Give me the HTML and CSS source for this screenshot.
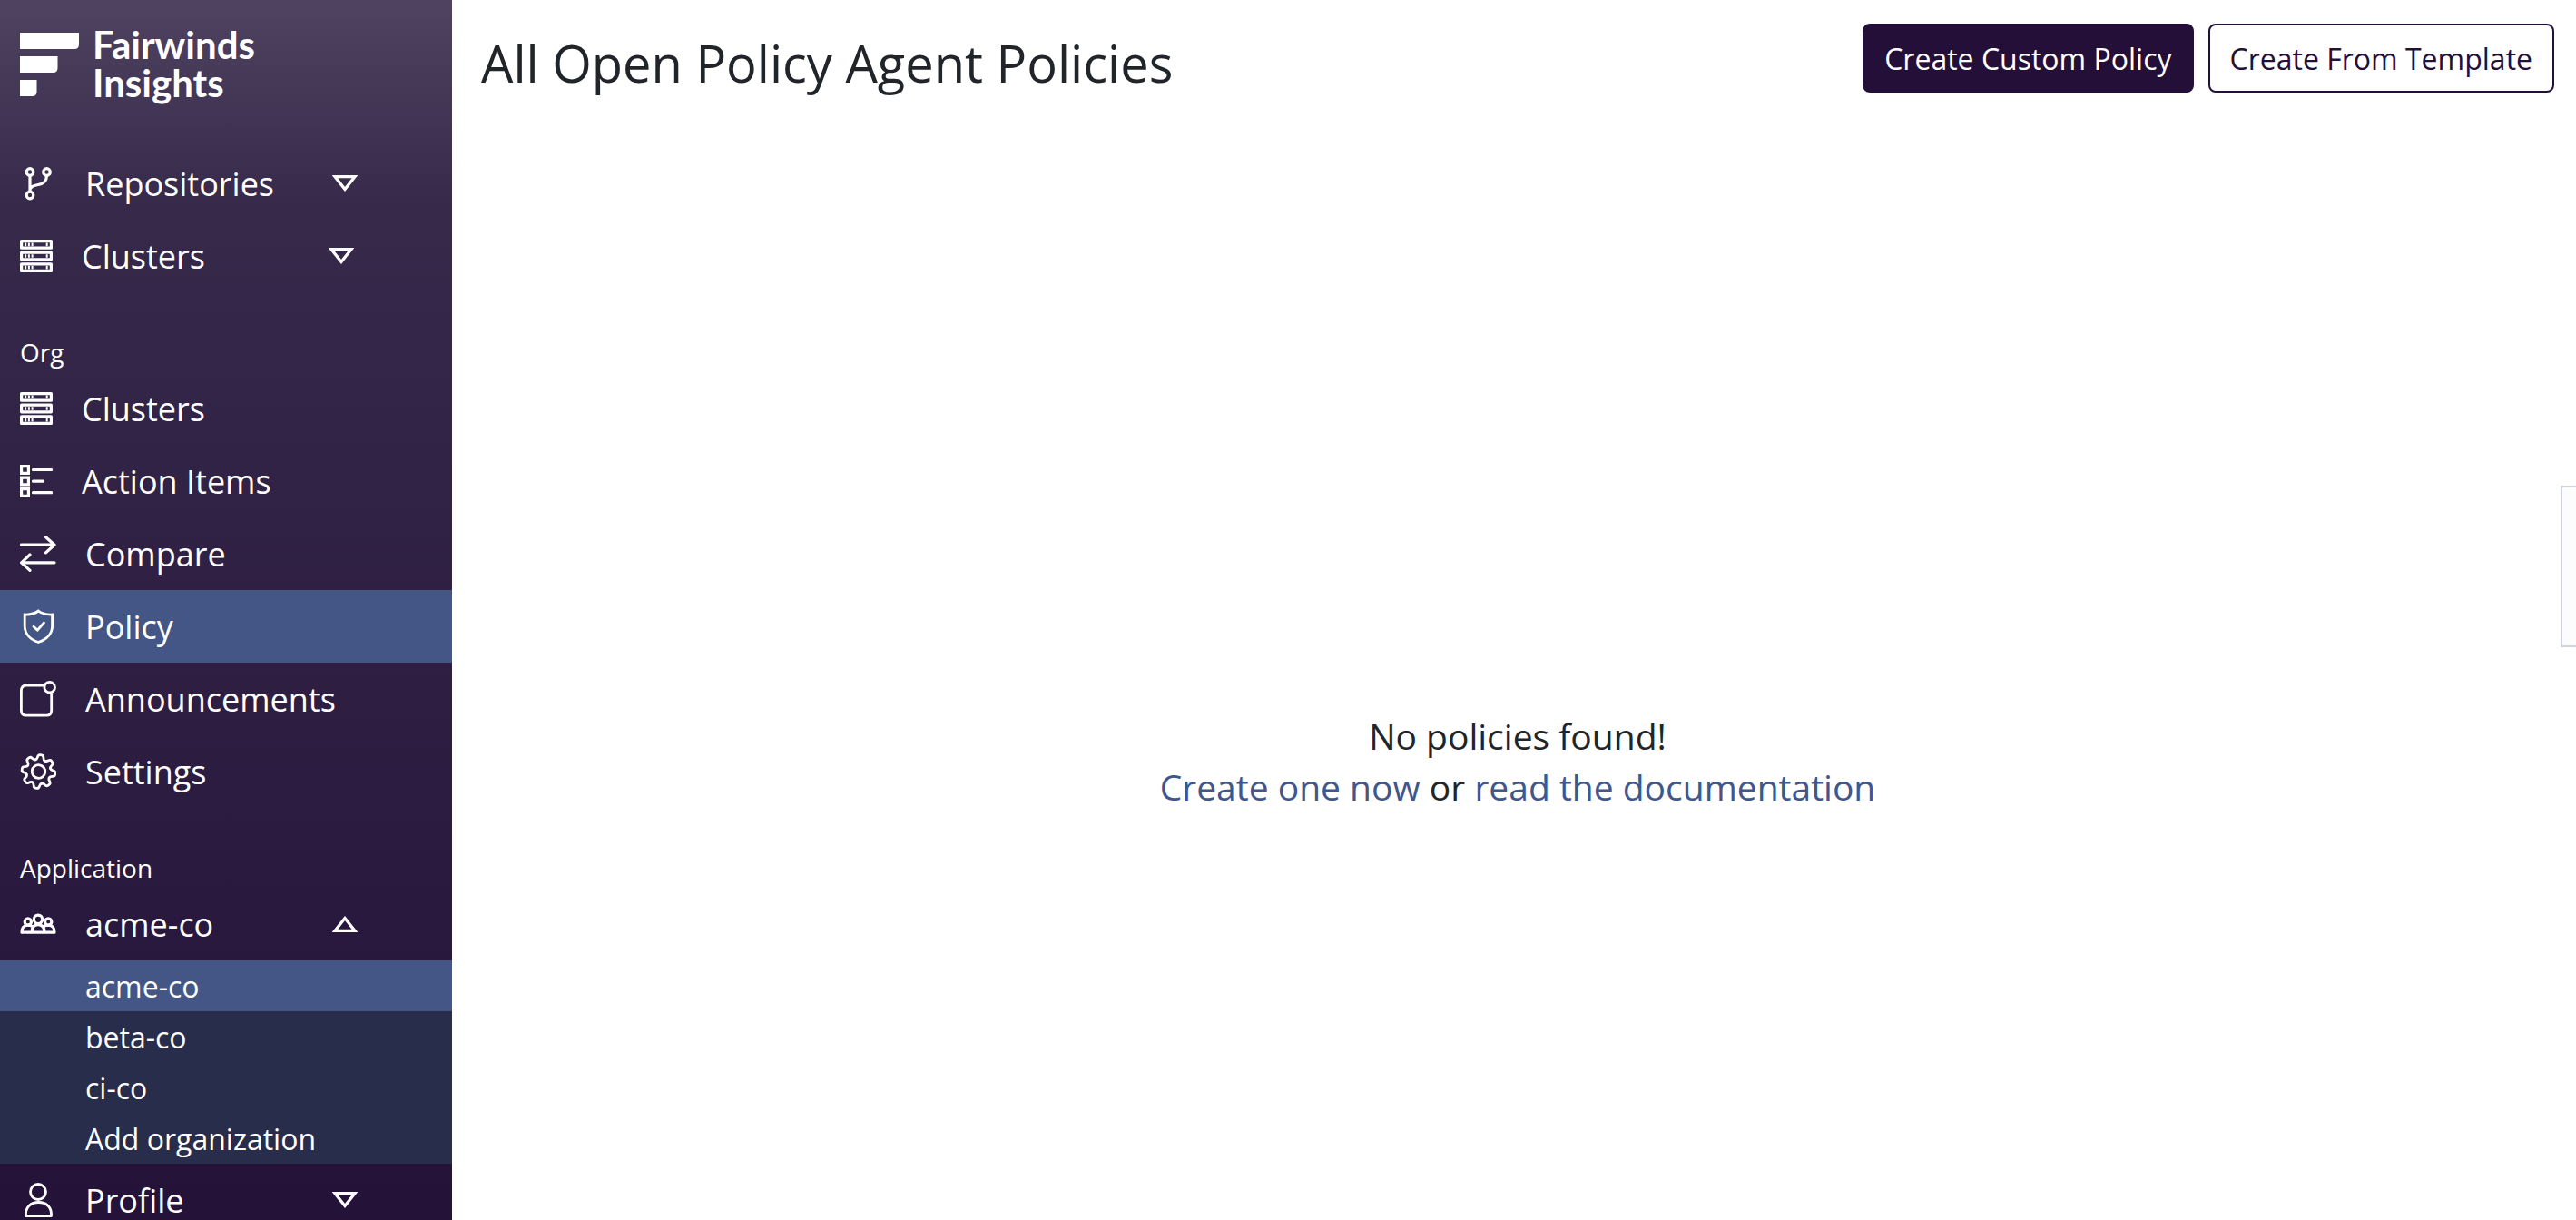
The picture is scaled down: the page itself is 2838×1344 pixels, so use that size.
FILE: index.html
```html
<!DOCTYPE html>
<html lang="en">
<head>
<meta charset="utf-8">
<meta name="viewport" content="width=device-width, initial-scale=1">
<title>All Open Policy Agent Policies</title>
<link rel="stylesheet" href="styles.css">
</head>
<body>
<svg class="sprite" aria-hidden="true">
  <symbol id="servers" viewBox="0 0 36 36">
    <path stroke-width="3.2" stroke-linejoin="round" d="M1.6 1.6h32.8v7.6H1.6zM1.6 14.2h32.8v7.6H1.6zM1.6 26.8h32.8v7.6H1.6z"/>
    <path stroke-width="2" d="M6.2 3.6v3.600M9.900 3.600v3.600M13.600 3.600v3.600M29.700 3.600v3.600M6.200 16.200v3.600M9.900 16.200v3.600M13.600 16.200v3.600M29.700 16.200v3.600M6.200 28.800v3.600M9.900 28.800v3.600M13.600 28.800v3.600M29.700 28.800v3.600"/>
  </symbol>
  <symbol id="down" viewBox="0 0 28 18">
    <path stroke-width="3.2" d="M3 1.6h22L14 15.5z"/>
  </symbol>
  <symbol id="up" viewBox="0 0 28 18">
    <path stroke-width="3.2" d="M3 16.4h22L14 2.5z"/>
  </symbol>
</svg>

<div class="layout">
  <aside class="sidebar">
    <a class="brand" href="#">
      <svg class="brand-mark" viewBox="0 0 66 72" aria-hidden="true">
        <path d="M0 1h65v13q0 5-5 5H0zM0 27h41.5v13q0 5-5 5H0zM0 53h18.5v13q0 5-5 5H0z"/>
      </svg>
      <span class="brand-name">Fairwinds<br>Insights</span>
    </a>

    <nav>
      <ul class="menu">
        <li><button class="item" type="button">
          <svg class="icon" viewBox="0 0 40 40"><circle cx="11" cy="7.5" r="3.8"/><circle cx="29.5" cy="7.5" r="3.8"/><circle cx="11" cy="33" r="3.8"/><path d="M11 11.5v17.5M29.5 11.5c0 7-4 9-9.5 10-5 1-8.500 2-9 5.500"/></svg>
          <span class="label">Repositories</span><svg class="caret"><use href="#down"/></svg>
        </button></li>
        <li><button class="item" type="button">
          <svg class="icon small"><use href="#servers"/></svg>
          <span class="label">Clusters</span><svg class="caret"><use href="#down"/></svg>
        </button></li>
      </ul>

      <h2 class="section">Org</h2>
      <ul class="menu">
        <li><a class="item" href="#"><svg class="icon small"><use href="#servers"/></svg><span class="label">Clusters</span></a></li>
        <li><a class="item" href="#">
          <svg class="icon small" viewBox="0 0 36 36"><path d="M1.6 1.6h7.8v7.8H1.6zM1.6 14.1h7.8v7.8H1.6zM1.6 26.600h7.800v7.800H1.600z"/><path stroke-linecap="round" d="M14.500 5.500h20M14.500 18.200h11M14.500 30.700h20"/></svg>
          <span class="label">Action Items</span></a></li>
        <li><a class="item" href="#">
          <svg class="icon" viewBox="0 0 40 40"><path stroke-linecap="round" stroke-linejoin="round" d="M1.500 10.200h36.500M28.500 1.700l9.500 8.500-9.500 8.700M38 29.800H1.600M11 21l-9.400 8.800 9.400 8.600"/></svg>
          <span class="label">Compare</span></a></li>
        <li><a class="item active" href="#" aria-current="page">
          <svg class="icon" viewBox="0 0 40 40"><path class="thin" d="M20.300 3C16.500 5.800 11 7.300 5.200 7v12.500c0 8.500 6 15 15.100 18 9.100-3 15.300-9.500 15.300-18V7C29.500 7.300 24 5.800 20.300 3z"/><path stroke-linecap="round" stroke-linejoin="round" class="thin" d="M15 20.300l4.300 3.900 7.200-8.200"/></svg>
          <span class="label">Policy</span></a></li>
        <li><a class="item" href="#">
          <svg class="icon" viewBox="0 0 40 40"><path class="thin" d="M26.500 5H7Q1.400 5 1.400 11v21.500q0 5.700 5.600 5.700h22q5.700 0 5.700-5.700V13.500"/><circle class="thin" cx="32.700" cy="7.200" r="5.800"/></svg>
          <span class="label">Announcements</span></a></li>
        <li><a class="item" href="#">
          <svg class="icon" viewBox="-20 -20 40 40"><g class="thin" transform="translate(.5 0) rotate(8)" stroke-linecap="round">
            <circle r="7.300"/>
            <path id="tooth" d="M-5.200-12.500C-4-13-3.400-14-3.200-16Q-2.800-18.400-1-18.400H1Q2.800-18.400 3.200-16C3.400-14 4-13 5.200-12.500"/>
            <use href="#tooth" transform="rotate(45)"/><use href="#tooth" transform="rotate(90)"/><use href="#tooth" transform="rotate(135)"/><use href="#tooth" transform="rotate(180)"/><use href="#tooth" transform="rotate(225)"/><use href="#tooth" transform="rotate(270)"/><use href="#tooth" transform="rotate(315)"/>
          </g></svg>
          <span class="label">Settings</span></a></li>
      </ul>

      <h2 class="section">Application</h2>
      <ul class="menu">
        <li>
          <button class="item" type="button" aria-expanded="true">
            <svg class="icon" viewBox="0 0 40 40"><g stroke-linejoin="round"><circle cx="20" cy="14.800" r="4.700"/><circle cx="8.800" cy="17.500" r="3.600"/><circle cx="31.200" cy="17.500" r="3.600"/><path d="M13 29.200c0-5 2-8.500 7-8.500s7 3.500 7 8.500M13.500 22.500c-1.500-1-3-1.300-4.700-1.300-4.500 0-7 3-6.800 8h36c.2-5-2.300-8-6.800-8-1.700 0-3.200.3-4.700 1.300"/></g></svg>
            <span class="label">acme-co</span><svg class="caret"><use href="#up"/></svg>
          </button>
          <ul class="submenu">
            <li><a class="subitem active" href="#">acme-co</a></li>
            <li><a class="subitem" href="#">beta-co</a></li>
            <li><a class="subitem" href="#">ci-co</a></li>
            <li><a class="subitem" href="#">Add organization</a></li>
          </ul>
        </li>
        <li><button class="item" type="button">
          <svg class="icon" viewBox="0 0 40 40"><circle class="thin" cx="20" cy="11" r="8.500"/><path class="thin" stroke-linejoin="round" d="M6.300 37.500C6 27.500 12 22.500 20.500 22.500S35 27.500 34.500 37.500z"/></svg>
          <span class="label">Profile</span><svg class="caret"><use href="#down"/></svg>
        </button></li>
      </ul>
    </nav>
  </aside>

  <main class="main">
    <header class="topbar">
      <h1 class="title">All Open Policy Agent Policies</h1>
      <div class="actions">
        <button class="btn primary" type="button">Create Custom Policy</button>
        <button class="btn" type="button">Create From Template</button>
      </div>
    </header>
    <section class="empty">
      <p>No policies found!</p>
      <p><a href="#">Create one now</a> or <a href="#">read the documentation</a></p>
    </section>
  </main>
</div>
<button class="drawer" type="button" aria-label="Open panel"></button>
</body>
</html>
```
FILE: styles.css
```css
* {
  box-sizing: border-box;
}

body,
h1,
h2,
p,
ul {
  margin: 0;
  padding: 0;
}

body {
  background: #fff;
  color: #212529;
  font-family: "Open Sans", "Noto Sans", sans-serif;
}

ul {
  list-style: none;
}

a {
  color: #41568c;
  text-decoration: none;
}

button {
  font: inherit;
  cursor: pointer;
}

.sprite {
  display: none;
}

.layout {
  display: flex;
  height: 100vh;
}

/* Sidebar */

.sidebar {
  flex: 0 0 498px;
  overflow: hidden;
  background: linear-gradient(#4f4361, #36294a 17%, #241239);
  color: #fff;
}

.brand {
  display: flex;
  gap: 14px;
  height: 162px;
  padding: 28px 22px 0;
  color: #fff;
}

.brand-mark {
  width: 66px;
  height: 72px;
  margin-top: 7px;
  fill: #fff;
}

.brand-name {
  font: 700 42px/42px Lato, sans-serif;
}

.item {
  display: flex;
  align-items: center;
  gap: 32px;
  width: 100%;
  height: 80px;
  padding: 0 22px;
  border: 0;
  background: none;
  color: #fff;
  font-size: 36px;
  text-align: left;
}

.item.active,
.subitem.active {
  background: #445686;
}

.icon,
.caret {
  flex: none;
  fill: none;
  stroke: #fff;
}

.icon {
  width: 40px;
  height: 40px;
  stroke-width: 3.2;
}

.icon.small {
  width: 36px;
  height: 36px;
}

.thin {
  stroke-width: 2.8;
}

.label {
  width: 240px;
}

.caret {
  width: 28px;
  height: 18px;
}

.section {
  padding: 44px 22px 0;
  font-size: 28px;
  font-weight: 400;
  line-height: 44px;
}

.submenu {
  background: #282d4c;
}

.subitem {
  display: block;
  height: 56px;
  padding-left: 94px;
  color: #fff;
  font-size: 32px;
  line-height: 58px;
}

/* Main column */

.main {
  flex: 1;
  display: flex;
  flex-direction: column;
  padding: 0 24px 0 32px;
}

.topbar {
  display: flex;
  justify-content: space-between;
  padding-top: 26px;
}

.title {
  font-size: 56px;
  font-weight: 400;
  line-height: 86px;
}

.actions {
  display: flex;
  align-items: flex-start;
  gap: 16px;
}

.btn {
  height: 76px;
  padding: 0 22px;
  border: 2px solid #230f38;
  border-radius: 8px;
  background: #fff;
  color: #230f38;
  font-size: 32px;
}

.btn.primary {
  background: #230f38;
  color: #fff;
}

.empty {
  flex: 1;
  display: flex;
  flex-direction: column;
  justify-content: center;
  padding-top: 222px;
  font-size: 39px;
  line-height: 56px;
  text-align: center;
}

.drawer {
  position: fixed;
  top: 535px;
  right: 0;
  width: 17px;
  height: 178px;
  padding: 0;
  border: 2px solid #cfd4da;
  border-right: 0;
  background: #fcfcfd;
}
```
